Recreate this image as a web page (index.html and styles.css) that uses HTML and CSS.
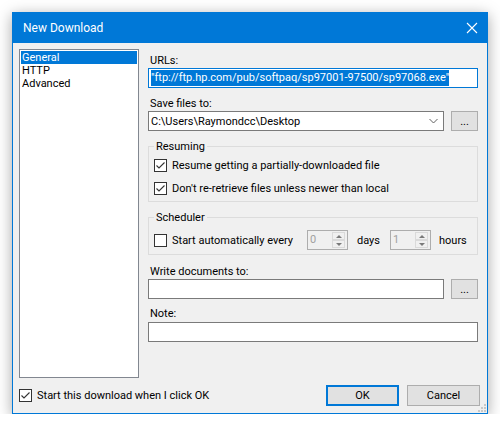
FILE: index.html
```html
<!DOCTYPE html>
<html lang="en">
<head>
    <meta charset="UTF-8">
    <title>New Download</title>
    <link rel="stylesheet" href="styles.css">
</head>
<body>
    <div class="window">
        <div class="titlebar">
            <span class="title">New Download</span>
            <svg class="close" width="12" height="12" viewBox="0 0 12 12">
                <path d="M1 1 L11 11 M11 1 L1 11" stroke="#fff" stroke-width="1.1" fill="none"/>
            </svg>
        </div>

        <div class="content">
            <div class="main">
                <!-- Page list -->
                <ul class="pages">
                    <li class="selected">General</li>
                    <li>HTTP</li>
                    <li>Advanced</li>
                </ul>

                <!-- General page -->
                <div class="form">
                    <div class="label first">URLs:</div>
                    <div class="field focused">
                        <span class="selection">"ftp://ftp.hp.com/pub/softpaq/sp97001-97500/sp97068.exe"</span>
                    </div>

                    <div class="label">Save files to:</div>
                    <div class="row">
                        <div class="field combo">
                            <span>C:\Users\Raymondcc\Desktop</span>
                            <svg class="chevron" width="9" height="6" viewBox="0 0 9 6">
                                <path d="M0.5 1 L4.5 5 L8.5 1" stroke="#606060" stroke-width="1" fill="none"/>
                            </svg>
                        </div>
                        <button class="btn browse">...</button>
                    </div>

                    <fieldset class="group resuming">
                        <legend>Resuming</legend>
                        <div class="check-row">
                            <span class="box">
                                <svg width="11" height="11" viewBox="0 0 11 11"><path d="M1.5 5.5 L4 8 L9.5 2.5" stroke="#333" stroke-width="1.1" fill="none"/></svg>
                            </span>
                            Resume getting a partially-downloaded file
                        </div>
                        <div class="check-row">
                            <span class="box">
                                <svg width="11" height="11" viewBox="0 0 11 11"><path d="M1.5 5.5 L4 8 L9.5 2.5" stroke="#333" stroke-width="1.1" fill="none"/></svg>
                            </span>
                            Don't re-retrieve files unless newer than local
                        </div>
                    </fieldset>

                    <fieldset class="group scheduler">
                        <legend>Scheduler</legend>
                        <div class="sched-row">
                            <div class="check-row auto">
                                <span class="box"></span>
                                Start automatically every
                            </div>
                            <div class="spin">
                                <span class="spin-value">0</span>
                                <div class="spin-buttons">
                                    <span class="arrow up"></span>
                                    <span class="arrow down"></span>
                                </div>
                            </div>
                            <span class="unit days">days</span>
                            <div class="spin">
                                <span class="spin-value">1</span>
                                <div class="spin-buttons">
                                    <span class="arrow up"></span>
                                    <span class="arrow down"></span>
                                </div>
                            </div>
                            <span class="unit hours">hours</span>
                        </div>
                    </fieldset>

                    <div class="label docs">Write documents to:</div>
                    <div class="row">
                        <div class="field"></div>
                        <button class="btn browse">...</button>
                    </div>

                    <div class="label note">Note:</div>
                    <div class="field note-field"></div>
                </div>
            </div>

            <div class="footer">
                <div class="check-row">
                    <span class="box">
                        <svg width="11" height="11" viewBox="0 0 11 11"><path d="M1.5 5.5 L4 8 L9.5 2.5" stroke="#333" stroke-width="1.1" fill="none"/></svg>
                    </span>
                    Start this download when I click OK
                </div>
                <div class="buttons">
                    <button class="btn ok">OK</button>
                    <button class="btn">Cancel</button>
                </div>
                <svg class="grip" width="8" height="8" viewBox="0 0 8 8">
                    <rect x="6" y="0" width="2" height="2" fill="#c8c8c8"/>
                    <rect x="3" y="3" width="2" height="2" fill="#c8c8c8"/>
                    <rect x="6" y="3" width="2" height="2" fill="#c8c8c8"/>
                    <rect x="0" y="6" width="2" height="2" fill="#c8c8c8"/>
                    <rect x="3" y="6" width="2" height="2" fill="#c8c8c8"/>
                    <rect x="6" y="6" width="2" height="2" fill="#c8c8c8"/>
                </svg>
            </div>
        </div>
    </div>
</body>
</html>
```

FILE: styles.css
```css
body {
    margin: 0;
    background-color: #fff;
    font-family: Roboto, "Noto Sans", sans-serif;
    font-size: 11px;
    color: #000;
}

.window {
    margin: 12px 0 0 12px;
    width: 474px;
    border: 1px solid #0078d7;
    border-top: none;
    background-color: #f0f0f0;
    box-shadow: 0 3px 14px rgba(0, 0, 0, 0.35);
}

.titlebar {
    height: 31px;
    background-color: #0078d7;
    color: #fff;
    display: flex;
    align-items: center;
    padding: 0 9px 0 10px;
}

.title {
    flex: 1;
    font-size: 12px;
    padding-top: 1px;
}

.content {
    position: relative;
    padding: 6px 7px 7px 6px;
}

.main {
    display: flex;
    height: 329px;
}

.pages {
    list-style: none;
    margin: 0;
    padding: 1px;
    width: 116px;
    border: 1px solid #828790;
    background-color: #fff;
}

.pages li {
    height: 13px;
    line-height: 13px;
    padding-left: 1px;
}

.pages li.selected {
    background-color: #0078d7;
    color: #fff;
}

.form {
    margin-left: 9px;
    width: 330px;
}

.label {
    height: 13px;
    line-height: 14px;
    padding-top: 1px;
    margin-top: 8px;
    padding-left: 2px;
}

.label.first {
    margin-top: 4px;
}

.label.docs {
    margin-top: 9px;
}

.label.note {
    margin-top: 7px;
}

.field {
    box-sizing: border-box;
    height: 20px;
    margin-top: 1px;
    border: 1px solid #7a7a7a;
    background-color: #fff;
    display: flex;
    align-items: center;
    padding-left: 2px;
    white-space: nowrap;
    overflow: hidden;
}

.field.focused {
    border-color: #0078d7;
}

.selection {
    background-color: #0078d7;
    color: #fff;
    line-height: 16px;
}

.note-field {
    margin-top: 2px;
}

.row {
    display: flex;
    gap: 7px;
    margin-top: 1px;
}

.row .field {
    flex: 1;
    margin-top: 0;
}

.combo .chevron {
    margin-left: auto;
    margin-right: 5px;
}

.btn {
    box-sizing: border-box;
    font-family: inherit;
    font-size: 11px;
    color: #000;
    background-color: #e1e1e1;
    border: 1px solid #adadad;
    padding: 0;
}

.browse {
    width: 27px;
    height: 20px;
    line-height: 14px;
    padding-top: 2px;
}

.group {
    margin: 8px 0 0 0;
    padding: 1px 5px 1px 5px;
    border: 1px solid #dcdcdc;
    min-width: 0;
}

.group legend {
    padding: 0 2px;
    height: 14px;
    line-height: 15px;
}

.check-row {
    display: flex;
    align-items: center;
    height: 23px;
    white-space: nowrap;
}

.box {
    box-sizing: border-box;
    width: 13px;
    height: 13px;
    border: 1px solid #333;
    background-color: #fff;
    margin-right: 5px;
    display: flex;
    align-items: center;
    justify-content: center;
    flex: none;
}

.scheduler {
    padding-top: 6px;
    padding-bottom: 4px;
}

.sched-row {
    display: flex;
    align-items: center;
    height: 20px;
}

.check-row.auto {
    width: 153px;
    height: 20px;
}

.spin {
    box-sizing: border-box;
    width: 41px;
    height: 20px;
    border: 1px solid #adadad;
    display: flex;
}

.spin-value {
    flex: 1;
    color: #a0a0a0;
    padding-left: 2px;
    line-height: 18px;
}

.spin-buttons {
    width: 13px;
    display: flex;
    flex-direction: column;
    padding: 1px 2px 1px 0;
}

.arrow {
    flex: 1;
    border: 1px solid #dadada;
    background-color: #f0f0f0;
    position: relative;
}

.arrow.up::after,
.arrow.down::after {
    content: "";
    position: absolute;
    left: 3px;
    top: 2px;
    border-left: 3px solid transparent;
    border-right: 3px solid transparent;
}

.arrow.up::after {
    border-bottom: 3px solid #7a7a7a;
}

.arrow.down::after {
    border-top: 3px solid #7a7a7a;
}

.unit.days {
    margin-left: 9px;
    width: 33px;
}

.unit.hours {
    margin-left: 8px;
}

.footer {
    margin-top: 7px;
    height: 21px;
    display: flex;
    align-items: center;
}

.footer .check-row {
    flex: 1;
    height: 21px;
}

.buttons {
    display: flex;
    gap: 8px;
}

.buttons .btn {
    width: 73px;
    height: 21px;
}

.btn.ok {
    border: 2px solid #0078d7;
}

.grip {
    position: absolute;
    right: 1px;
    bottom: 1px;
}
```
